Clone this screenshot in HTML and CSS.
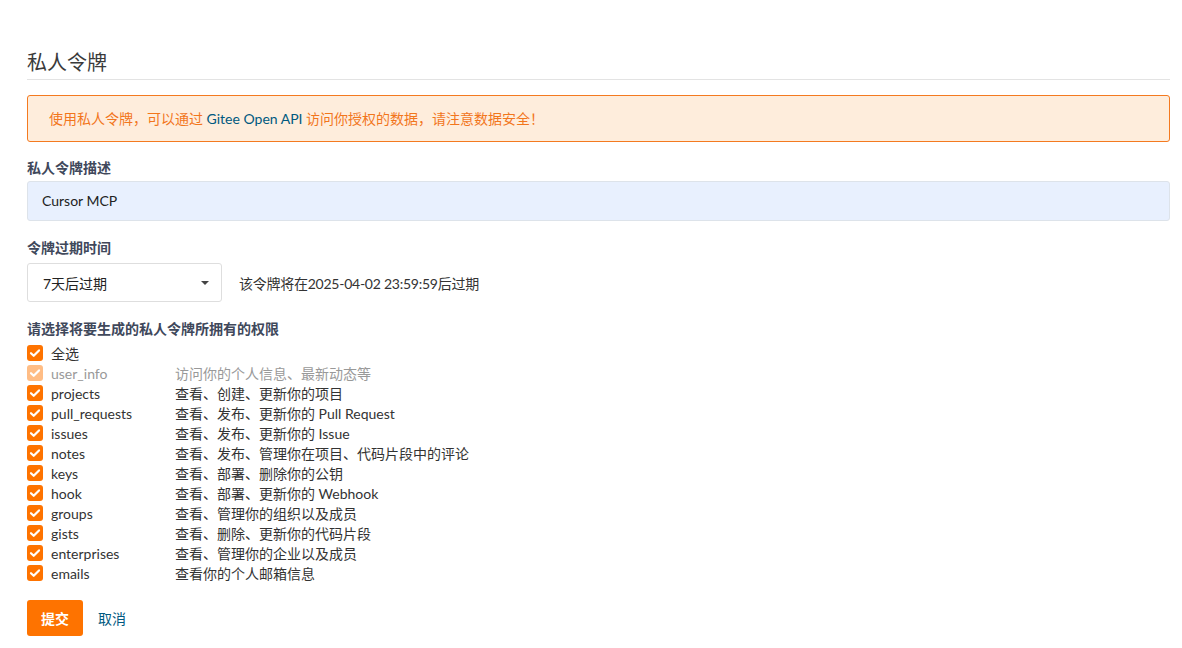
FILE: index.html
```html
<!DOCTYPE html>
<html lang="zh-CN">
<head>
<meta charset="utf-8">
<title>私人令牌</title>
<link rel="stylesheet" href="styles.css">
</head>
<body>
<div class="page">
  <h1 class="title">私人令牌</h1>
  <div class="alert">使用私人令牌，可以通过 <span class="alert-link">Gitee Open API</span> 访问你授权的数据，请注意数据安全！</div>

  <div class="field-label first">私人令牌描述</div>
  <div class="text-input">Cursor MCP</div>

  <div class="field-label">令牌过期时间</div>
  <div class="expire-row">
    <div class="select"><span>7天后过期</span><span class="caret"></span></div>
    <span class="hint">该令牌将在2025-04-02 23:59:59后过期</span>
  </div>

  <div class="field-label">请选择将要生成的私人令牌所拥有的权限</div>
  <div class="perms">
    <div class="perm"><span class="cb"><svg viewBox="0 0 16 16"><path d="M4 8.2l2.7 2.6L12 5.4"/></svg></span><span class="name">全选</span></div>
    <div class="perm disabled"><span class="cb"><svg viewBox="0 0 16 16"><path d="M4 8.2l2.7 2.6L12 5.4"/></svg></span><span class="name">user_info</span><span class="desc">访问你的个人信息、最新动态等</span></div>
    <div class="perm"><span class="cb"><svg viewBox="0 0 16 16"><path d="M4 8.2l2.7 2.6L12 5.4"/></svg></span><span class="name">projects</span><span class="desc">查看、创建、更新你的项目</span></div>
    <div class="perm"><span class="cb"><svg viewBox="0 0 16 16"><path d="M4 8.2l2.7 2.6L12 5.4"/></svg></span><span class="name">pull_requests</span><span class="desc">查看、发布、更新你的 Pull Request</span></div>
    <div class="perm"><span class="cb"><svg viewBox="0 0 16 16"><path d="M4 8.2l2.7 2.6L12 5.4"/></svg></span><span class="name">issues</span><span class="desc">查看、发布、更新你的 Issue</span></div>
    <div class="perm"><span class="cb"><svg viewBox="0 0 16 16"><path d="M4 8.2l2.7 2.6L12 5.4"/></svg></span><span class="name">notes</span><span class="desc">查看、发布、管理你在项目、代码片段中的评论</span></div>
    <div class="perm"><span class="cb"><svg viewBox="0 0 16 16"><path d="M4 8.2l2.7 2.6L12 5.4"/></svg></span><span class="name">keys</span><span class="desc">查看、部署、删除你的公钥</span></div>
    <div class="perm"><span class="cb"><svg viewBox="0 0 16 16"><path d="M4 8.2l2.7 2.6L12 5.4"/></svg></span><span class="name">hook</span><span class="desc">查看、部署、更新你的 Webhook</span></div>
    <div class="perm"><span class="cb"><svg viewBox="0 0 16 16"><path d="M4 8.2l2.7 2.6L12 5.4"/></svg></span><span class="name">groups</span><span class="desc">查看、管理你的组织以及成员</span></div>
    <div class="perm"><span class="cb"><svg viewBox="0 0 16 16"><path d="M4 8.2l2.7 2.6L12 5.4"/></svg></span><span class="name">gists</span><span class="desc">查看、删除、更新你的代码片段</span></div>
    <div class="perm"><span class="cb"><svg viewBox="0 0 16 16"><path d="M4 8.2l2.7 2.6L12 5.4"/></svg></span><span class="name">enterprises</span><span class="desc">查看、管理你的企业以及成员</span></div>
    <div class="perm"><span class="cb"><svg viewBox="0 0 16 16"><path d="M4 8.2l2.7 2.6L12 5.4"/></svg></span><span class="name">emails</span><span class="desc">查看你的个人邮箱信息</span></div>
  </div>

  <div class="actions">
    <button class="btn-submit">提交</button>
    <a class="btn-cancel">取消</a>
  </div>
</div>
</body>
</html>
```

FILE: styles.css
```css
* { box-sizing: border-box; }
body {
  margin: 0;
  background: #fff;
  font-family: "Lato", "Noto Sans CJK SC", sans-serif;
  color: #333;
}
.page {
  padding: 48px 12px 0 27px;
}
.title {
  margin: 0;
  font-size: 20px;
  font-weight: normal;
  line-height: 28px;
  color: #3a3a3a;
  padding-bottom: 3px;
  border-bottom: 1px solid #e3e3e3;
}
.alert {
  margin-top: 15px;
  height: 47px;
  line-height: 45px;
  border: 1px solid #f47a20;
  border-radius: 3px;
  background: #feeddc;
  color: #f2761c;
  font-size: 14px;
  padding: 0 21px;
}
.alert-link { color: #005980; }
.field-label {
  margin-top: 19px;
  font-size: 14px;
  font-weight: bold;
  line-height: 16px;
  color: #40485b;
}
.field-label.first { margin-top: 18px; }
.text-input {
  margin-top: 5px;
  height: 40px;
  line-height: 38px;
  border: 1px solid #dde3ea;
  border-radius: 3px;
  background: #e8f0fe;
  padding-left: 14px;
  font-size: 14px;
  color: #222;
}
.expire-row {
  margin-top: 7px;
  display: flex;
  align-items: center;
  gap: 17px;
}
.select {
  width: 195px;
  height: 39px;
  border: 1px solid #dedede;
  border-radius: 3px;
  display: flex;
  align-items: center;
  justify-content: space-between;
  padding: 0 12px 0 15px;
  font-size: 14px;
  color: #222;
}
.caret {
  width: 0; height: 0;
  border-left: 4px solid transparent;
  border-right: 4px solid transparent;
  border-top: 4px solid #444;
}
.hint { font-size: 14px; color: #333; letter-spacing: -0.25px; }
.perms { margin-top: 6px; }
.perm {
  display: flex;
  align-items: center;
  height: 20px;
  font-size: 14px;
  color: #333;
}
.cb {
  width: 16px; height: 16px;
  border-radius: 3px;
  background: #fe7300;
  margin-right: 8px;
  display: flex;
}
.cb svg { width: 16px; height: 16px; }
.cb path { fill: none; stroke: #fff; stroke-width: 2.2; stroke-linecap: round; stroke-linejoin: round; }
.name { width: 124px; }
.perm.disabled { color: #999; }
.perm.disabled .cb { background: #ffbd85; }
.actions {
  margin-top: 17px;
  display: flex;
  align-items: center;
  gap: 15px;
}
.btn-submit {
  width: 56px; height: 36px;
  border: none;
  border-radius: 3px;
  background: #fe7300;
  color: #fff;
  font-family: inherit;
  font-size: 14px;
  font-weight: bold;
  padding: 0;
}
.btn-cancel { font-size: 14px; color: #005980; }
```
